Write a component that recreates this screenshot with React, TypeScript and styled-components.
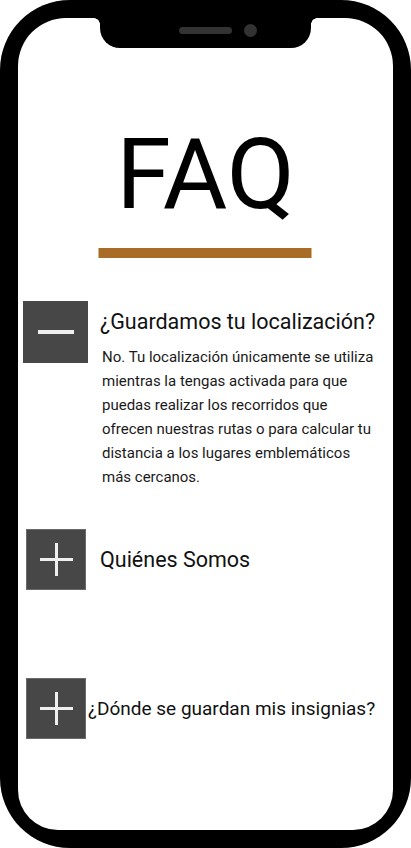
import React from "react";
import styled, { createGlobalStyle } from "styled-components";

const GlobalStyle = createGlobalStyle`
  html, body {
    margin: 0;
    padding: 0;
    background: #ffffff;
  }
  body {
    font-family: Roboto, "Noto Sans", "Liberation Sans", sans-serif;
  }
  * { box-sizing: border-box; }
`;

const Phone = styled.div`
  width: 411px;
  height: 848px;
  background: #000;
  border-radius: 70px;
  padding: 18px;
`;

const Screen = styled.div`
  position: relative;
  height: 100%;
  background: #fff;
  border-radius: 48px 48px 40px 40px;
  overflow: hidden;
  display: flex;
  flex-direction: column;
`;

const Notch = styled.div`
  position: absolute;
  top: 0;
  left: 82px;
  width: 211px;
  height: 30px;
  background: #000;
  border-radius: 0 0 20px 20px;
  display: flex;
  align-items: center;
  justify-content: center;
  gap: 12px;
  padding-left: 24px;
  padding-bottom: 6px;

  &::before,
  &::after {
    content: "";
    position: absolute;
    top: 0;
    width: 6px;
    height: 6px;
  }
  &::before {
    left: -6px;
    background: radial-gradient(circle at 0 100%, transparent 5.5px, #000 6px);
  }
  &::after {
    right: -6px;
    background: radial-gradient(circle at 100% 100%, transparent 5.5px, #000 6px);
  }
`;

const Speaker = styled.div`
  width: 53px;
  height: 7px;
  border-radius: 4px;
  background: #333;
`;

const Camera = styled.div`
  width: 13px;
  height: 13px;
  border-radius: 50%;
  background: #333;
`;

const Title = styled.h1`
  margin: 107px 0 0;
  font-family: Roboto, "Liberation Sans", sans-serif;
  font-weight: 400;
  font-size: 99px;
  line-height: 98px;
  text-align: center;
  color: #000;
  letter-spacing: 0;
`;

const Rule = styled.div`
  align-self: center;
  margin-top: 25px;
  width: 213px;
  height: 10px;
  background: #a86c26;
  transform: translateX(-0.5px);
`;

const List = styled.div`
  display: flex;
  flex-direction: column;
`;

const Item = styled.div<{ $top: number; $left: number; $gap: number; $align: string }>`
  display: flex;
  align-items: ${(p) => p.$align};
  margin-top: ${(p) => p.$top}px;
  padding-left: ${(p) => p.$left}px;
  gap: ${(p) => p.$gap}px;
`;

const Toggle = styled.div<{ $w: number; $h: number; $edge: boolean }>`
  flex: none;
  width: ${(p) => p.$w}px;
  height: ${(p) => p.$h}px;
  background: #474747;
  border: ${(p) => (p.$edge ? "1px solid #6a6a6a" : "none")};
  display: flex;
  align-items: center;
  justify-content: center;
`;

const Body = styled.div`
  display: flex;
  flex-direction: column;
`;

const Question = styled.div<{ $pad: number; $size: number }>`
  padding-top: ${(p) => p.$pad}px;
  font-size: ${(p) => p.$size}px;
  line-height: 24px;
  color: #111;
  white-space: nowrap;
`;

const Answer = styled.p`
  margin: 11px 0 0 2px;
  width: 276px;
  font-size: 15px;
  line-height: 24px;
  color: #1a1a1a;
`;

const MinusIcon = () => (
  <svg width="36" height="4" viewBox="0 0 36 4">
    <rect x="0" y="0" width="36" height="4" fill="#efefef" />
  </svg>
);

const PlusIcon = () => (
  <svg width="33" height="33" viewBox="0 0 33 33">
    <rect x="0" y="15" width="33" height="3" fill="#efefef" />
    <rect x="15" y="0" width="3" height="33" fill="#efefef" />
  </svg>
);

export default function App() {
  return (
    <>
      <GlobalStyle />
      <Phone>
        <Screen>
          <Notch>
            <Speaker />
            <Camera />
          </Notch>
          <Title>FAQ</Title>
          <Rule />
          <List>
            <Item $top={43} $left={5} $gap={12} $align="flex-start">
              <Toggle $w={65} $h={62} $edge={false}>
                <MinusIcon />
              </Toggle>
              <Body>
                <Question $pad={9} $size={21.5}>¿Guardamos tu localización?</Question>
                <Answer>
                  No. Tu localización únicamente se utiliza mientras la tengas
                  activada para que puedas realizar los recorridos que ofrecen
                  nuestras rutas o para calcular tu distancia a los lugares
                  emblemáticos más cercanos.
                </Answer>
              </Body>
            </Item>
            <Item $top={40} $left={8} $gap={14} $align="center">
              <Toggle $w={60} $h={61} $edge>
                <PlusIcon />
              </Toggle>
              <Question $pad={0} $size={21.5}>Quiénes Somos</Question>
            </Item>
            <Item $top={88} $left={8} $gap={2} $align="center">
              <Toggle $w={60} $h={61} $edge>
                <PlusIcon />
              </Toggle>
              <Question $pad={0} $size={19}>¿Dónde se guardan mis insignias?</Question>
            </Item>
          </List>
        </Screen>
      </Phone>
    </>
  );
}
